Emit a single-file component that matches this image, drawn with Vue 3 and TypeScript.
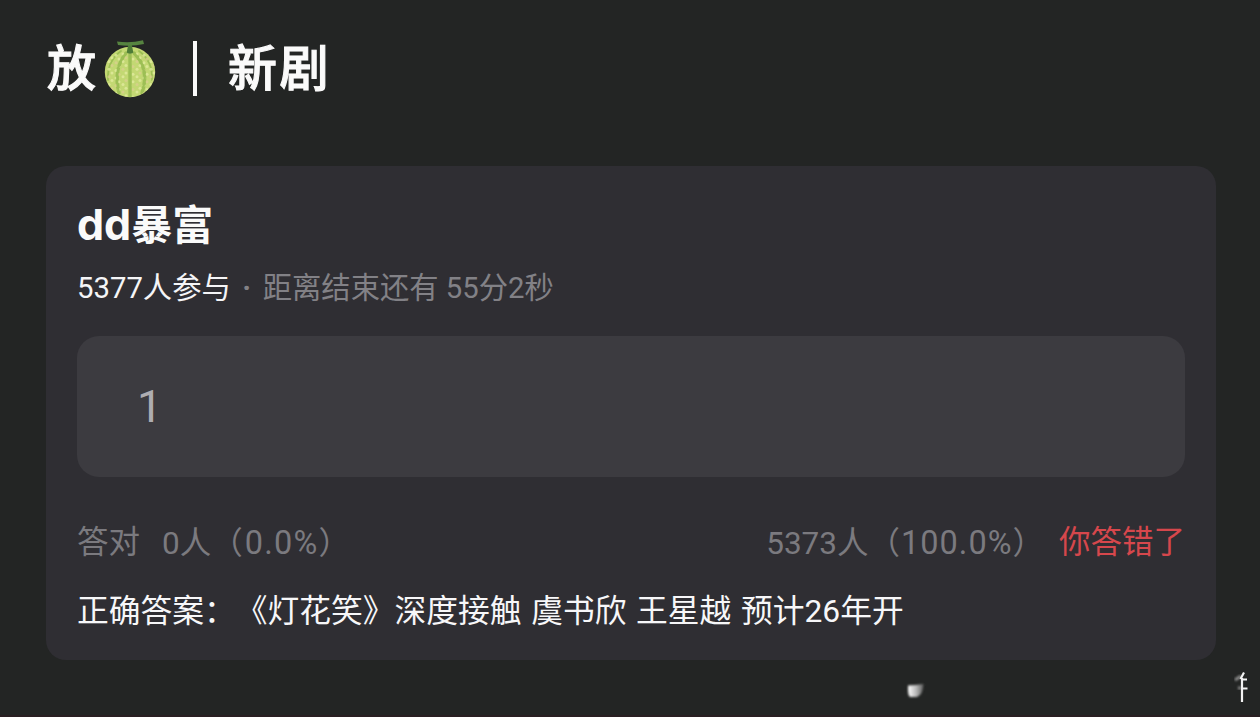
<script setup lang="ts">
interface Tally {
  people: string
  percent: string
}

interface Quiz {
  title: string
  joined: string
  countdown: string
  input: string
  right: Tally
  wrong: Tally
  answer: string
}

const quiz: Quiz = {
  title: '暴富',
  joined: '5377人参与',
  countdown: '距离结束还有 55分2秒',
  input: '1',
  right: { people: '0人', percent: '0.0%' },
  wrong: { people: '5373人', percent: '100.0%' },
  answer: '正确答案：《灯花笑》深度接触 虞书欣 王星越 预计26年开',
}

// Speckles of the melon rind, laid out between the darker ribs
const speckles = Array.from({ length: 84 }, (_, i) => {
  const row = Math.floor(i / 7)
  const col = i % 7
  return {
    x: 5 + col * 7 + (row % 2) * 3,
    y: 15 + row * 3.8 + (col % 2) * 1.2,
    pink: (i * 5) % 3 === 0,
  }
})
</script>

<template>
  <main class="page">
    <header class="heading">
      <span>放</span>
      <svg class="melon" viewBox="0 0 52 60" width="52" height="60">
        <defs>
          <clipPath id="rind"><circle cx="26" cy="33" r="25" /></clipPath>
        </defs>
        <circle cx="26" cy="33" r="25.2" fill="#c3d873" />
        <g clip-path="url(#rind)">
          <g fill="none" stroke="#9dbf55" stroke-linecap="round">
            <path d="M22 14Q9 30 15 54" stroke-width="3.4" />
            <path d="M30 14Q46 30 38 54" stroke-width="3.4" />
            <path d="M17 12Q3 22 4 41M35 12Q49 22 48 41" stroke-width="1.8" />
          </g>
          <circle
            v-for="(s, i) in speckles"
            :key="i"
            :cx="s.x"
            :cy="s.y"
            r="1.5"
            :fill="s.pink ? '#dccf92' : '#e6eea4'"
            fill-opacity=".7"
          />
          <g fill="none" stroke="#9dbf55">
            <path d="M26 15V59" stroke-width="3.4" />
            <path d="M22 14Q9 30 15 54M30 14Q46 30 38 54" stroke-width="2" />
          </g>
        </g>
        <path d="M22.700 13.500L24.300 5H27.700L29.300 13.500Q26 16 22.700 13.500Z" fill="#4d7c37" />
        <path d="M13 2.400Q26 4.500 39 1.200L40 5Q27 8 14 6Z" fill="#568440" />
      </svg>
      <i class="divider"></i>
      <span class="topic">新剧</span>
    </header>

    <section class="card">
      <h2 class="title"><span class="latin">dd</span>{{ quiz.title }}</h2>
      <p class="meta">
        <span class="joined">{{ quiz.joined }}</span>
        <span class="dot">·</span>
        <span>{{ quiz.countdown }}</span>
      </p>
      <div class="field">{{ quiz.input }}</div>
      <div class="stats">
        <span>答对</span>
        <span class="right-count">{{ quiz.right.people }}（<span class="percent">{{ quiz.right.percent }}</span>）</span>
        <span class="wrong-count">{{ quiz.wrong.people }}（<span class="percent">{{ quiz.wrong.percent }}</span>）</span>
        <span class="verdict">你答错了</span>
      </div>
      <p class="answer">{{ quiz.answer }}</p>
    </section>

    <svg class="mark" viewBox="0 0 350 40" width="350" height="40">
      <defs>
        <linearGradient id="fade" x1="0" x2="1" y1="0" y2="0">
          <stop offset="0" stop-color="#ffffff" />
          <stop offset=".55" stop-color="#b4b4b4" />
          <stop offset="1" stop-color="#5a5b5a" />
        </linearGradient>
        <filter id="soft"><feGaussianBlur stdDeviation=".8" /></filter>
      </defs>
      <path d="M8 15.500Q15 15 23.500 14Q23 25 17 27H10Q8 25 8 21Z" fill="url(#fade)" filter="url(#soft)" />
      <path d="M335 10L341 6M338 18H341" stroke="#8a8a8a" stroke-width="3" filter="url(#soft)" />
      <path d="M344 2.500L340.500 9M341 9.500H347M341 18.500H347.500M342 8V32" stroke="#f2f2f2" stroke-width="2.200" fill="none" />
    </svg>
  </main>
</template>

<style>
body {
  margin: 0;
  background: #232524;
}
</style>

<style scoped>
.page {
  position: relative;
  box-sizing: border-box;
  width: 1260px;
  height: 717px;
  padding: 36px 44px 0 46px;
  overflow: hidden;
  background: #232524;
  border-bottom: 2px solid #291f22;
  font-family: Roboto, "Noto Sans CJK SC", sans-serif;
  text-spacing-trim: space-all;
  color: #fafafa;
}

.heading {
  display: flex;
  align-items: center;
  height: 66px;
  margin-bottom: 64px;
  padding-left: 1px;
  font-size: 49px;
  line-height: 66px;
  font-weight: 500;
  -webkit-text-stroke: 1.1px #fafafa;
}

.heading span {
  padding-top: 2px;
}

.melon {
  margin: 0 0 1px 8px;
}

.divider {
  width: 4px;
  height: 55px;
  margin: 0 31px 2px 37px;
  background: #fafafa;
}

.topic {
  letter-spacing: 2.5px;
}

.card {
  box-sizing: border-box;
  width: 1170px;
  height: 494px;
  padding: 33px 31px 0;
  border-radius: 20px;
  background: #2f2e33;
}

.title {
  margin: 0;
  height: 50px;
  font-size: 41px;
  line-height: 50px;
  font-weight: 700;
}

.latin {
  font-family: Inter, sans-serif;
  font-size: 43px;
}

.meta {
  display: flex;
  margin: 20px 0 28px;
  height: 39px;
  font-size: 29.3px;
  line-height: 39px;
  color: #828186;
}

.joined {
  color: #f5f5f7;
}

.dot {
  width: 32px;
  text-align: center;
  font-weight: 700;
}

.field {
  box-sizing: border-box;
  height: 141px;
  padding-left: 60px;
  border-radius: 22px;
  background: #3c3b40;
  font-size: 45px;
  line-height: 141px;
  color: #aeadb2;
}

.stats {
  display: flex;
  height: 44px;
  margin-top: 44px;
  font-size: 31.5px;
  line-height: 44px;
  color: #7b7a7f;
}

.right-count {
  margin-left: 22px;
}

.wrong-count {
  margin-left: auto;
}

.percent {
  margin-left: 1px;
  font-size: 32.5px;
  letter-spacing: 1px;
}

.right-count .percent {
  margin-left: 2px;
  letter-spacing: 1.2px;
}

.verdict {
  margin-left: 15px;
  color: #d6474c;
}

.answer {
  margin: 25px 0 0;
  height: 44px;
  font-size: 31.75px;
  line-height: 44px;
  word-spacing: 1.8px;
  white-space: nowrap;
  color: #f7f7f9;
}

.mark {
  position: absolute;
  left: 900px;
  top: 670px;
}
</style>
